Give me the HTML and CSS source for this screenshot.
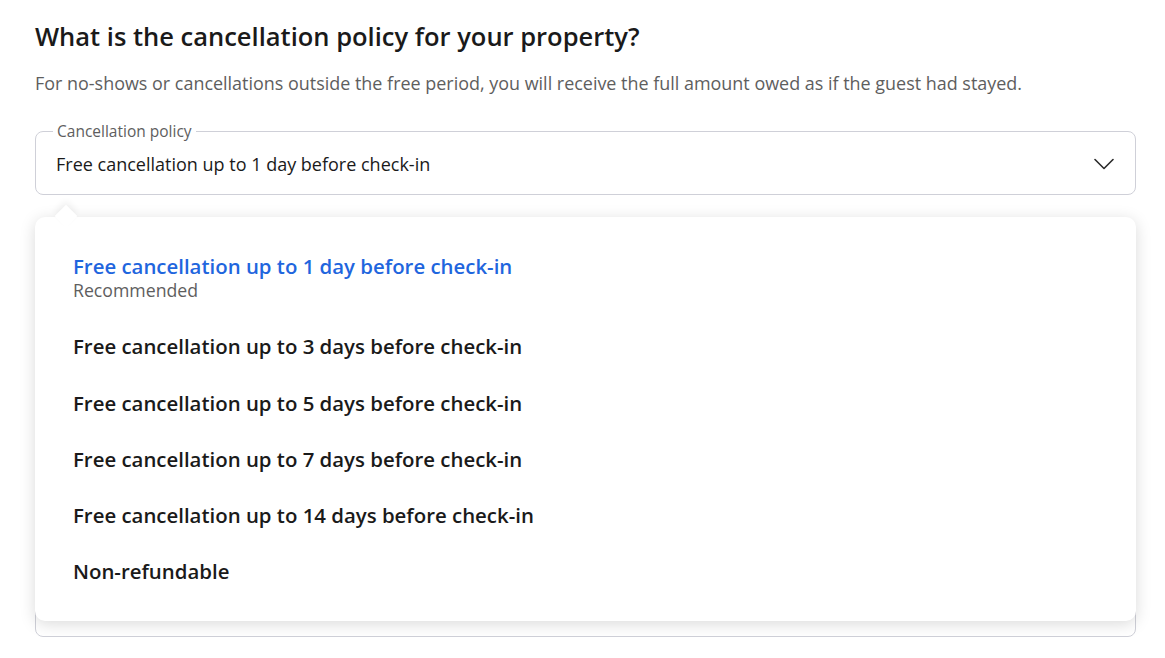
FILE: index.html
```html
<!DOCTYPE html>
<html lang="en">
<head>
<meta charset="utf-8">
<title>Cancellation policy</title>
<link rel="stylesheet" href="styles.css">
</head>
<body>
<main class="page">
  <h1 class="title">What is the cancellation policy for your property?</h1>
  <p class="desc">For no-shows or cancellations outside the free period, you will receive the full amount owed as if the guest had stayed.</p>

  <div class="field-wrap">
    <fieldset class="field">
      <legend class="field-label">Cancellation policy</legend>
      <div class="field-row">
        <span class="field-value">Free cancellation up to 1 day before check-in</span>
        <svg class="chevron" width="20" height="12" viewBox="0 0 20 12" aria-hidden="true">
          <path d="M1 1.5 L10 10.5 L19 1.5" fill="none" stroke="#2b2b2b" stroke-width="1.6" stroke-linecap="round" stroke-linejoin="round"/>
        </svg>
      </div>
    </fieldset>

    <fieldset class="field field-under">
      <legend class="field-label">&nbsp;</legend>
      <div class="field-row"></div>
    </fieldset>

    <ul class="menu" role="listbox">
      <li class="option selected" role="option">
        <span class="option-title">Free cancellation up to 1 day before check-in</span>
        <span class="option-sub">Recommended</span>
      </li>
      <li class="option" role="option"><span class="option-title">Free cancellation up to 3 days before check-in</span></li>
      <li class="option" role="option"><span class="option-title">Free cancellation up to 5 days before check-in</span></li>
      <li class="option" role="option"><span class="option-title">Free cancellation up to 7 days before check-in</span></li>
      <li class="option" role="option"><span class="option-title">Free cancellation up to 14 days before check-in</span></li>
      <li class="option" role="option"><span class="option-title">Non-refundable</span></li>
    </ul>
  </div>
</main>
</body>
</html>
```

FILE: styles.css
```css
* { box-sizing: border-box; }

html, body {
  margin: 0;
  padding: 0;
  background: #ffffff;
}

body {
  font-family: "Open Sans", "Noto Sans", "Liberation Sans", sans-serif;
  color: #1a1a1a;
}

.page {
  width: 1101px;
  margin-left: 35px;
  padding-top: 18px;
}

.title {
  margin: 0;
  font-size: 25.5px;
  line-height: 36px;
  font-weight: 600;
  color: #1a1a1a;
}

.desc {
  margin: 17px 0 0;
  font-size: 17.95px;
  line-height: 24px;
  color: #5e5e5e;
}

.field-wrap {
  position: relative;
  margin-top: 27px;
}

.field {
  margin: 0;
  padding: 0;
  border: 1px solid #cfd0d8;
  border-radius: 8px;
  min-width: 0;
}

.field-label {
  margin-left: 17px;
  padding: 0 4px;
  font-size: 15.5px;
  line-height: 18px;
  color: #5e5e5e;
}

.field-row {
  display: flex;
  align-items: center;
  justify-content: space-between;
  height: 61px;
  padding: 0 21px 0 20px;
  margin-top: -7px;
}

.field-value {
  font-size: 18px;
  line-height: 24px;
  color: #1a1a1a;
}

.chevron {
  display: block;
}

.field-under {
  margin-top: 369px;
}

.menu {
  position: absolute;
  left: 0;
  top: 95px;
  width: 1101px;
  margin: 0;
  padding: 21px 0 21px;
  list-style: none;
  background: #ffffff;
  border-radius: 10px;
  box-shadow: 0 3px 16px rgba(0, 0, 0, 0.15);
}

.menu::before {
  content: "";
  position: absolute;
  left: 23px;
  top: -9px;
  width: 16px;
  height: 16px;
  background: #ffffff;
  transform: rotate(45deg);
  box-shadow: -3px -3px 6px rgba(0, 0, 0, 0.06);
}

.option {
  position: relative;
  display: flex;
  flex-direction: column;
  padding: 16px 38px;
}

.option-title {
  font-size: 20.4px;
  line-height: 24.25px;
  font-weight: 600;
  color: #1a1a1a;
}

.option-sub {
  font-size: 17.7px;
  line-height: 24px;
  color: #5e5e5e;
}

.selected .option-title {
  color: #1f66de;
}
```
